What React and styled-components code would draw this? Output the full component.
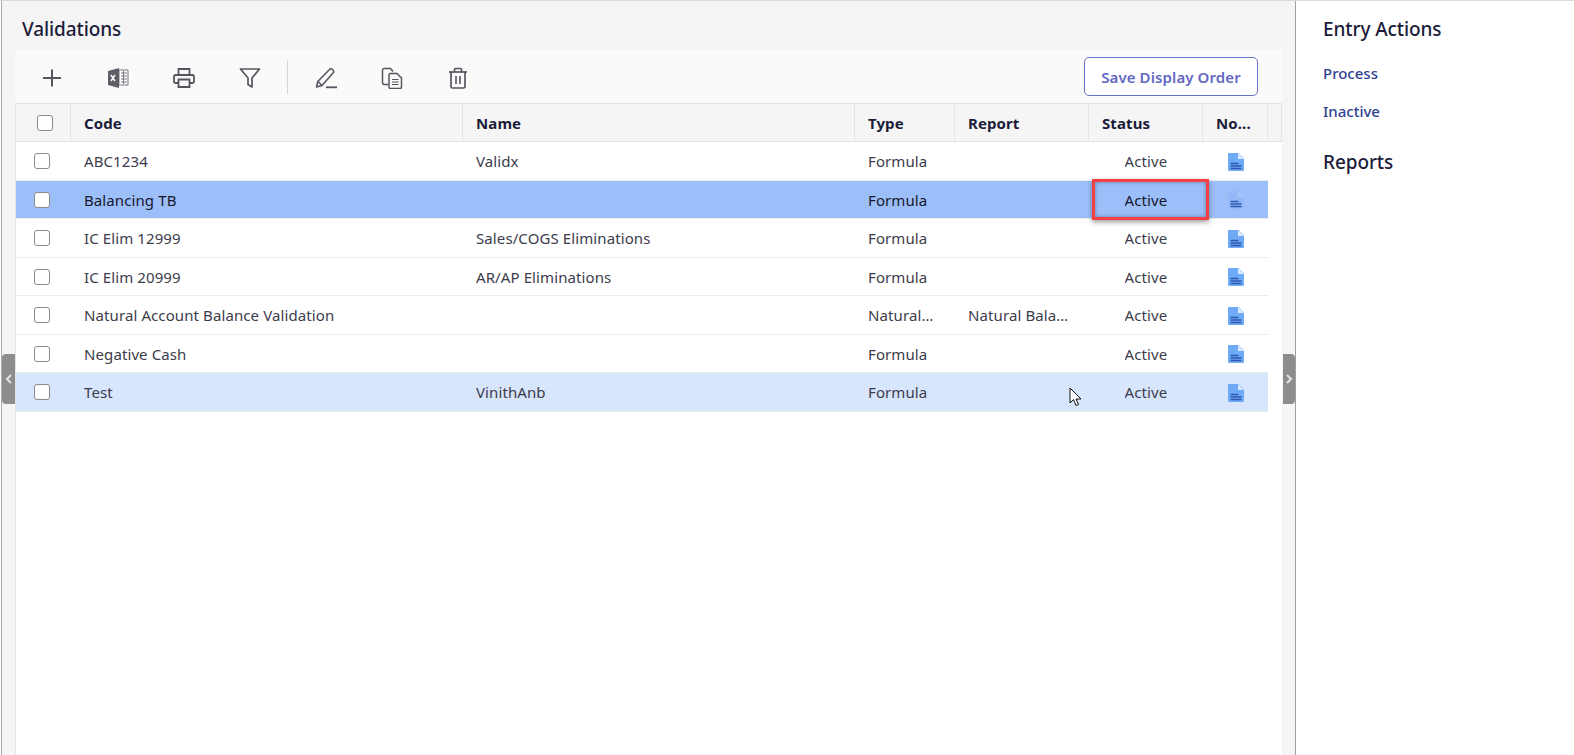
import React from "react";
import styled, { createGlobalStyle } from "styled-components";

const Global = createGlobalStyle`
  html, body { margin: 0; padding: 0; height: 100%; overflow: hidden; background: #fff; }
  body { font-family: "Noto Sans", "Open Sans", sans-serif; color: #1c1c3a; }
  #root { height: 100vh; }
`;

const Page = styled.div`
  position: relative;
  height: 755px;
  width: 1574px;
  display: flex;
  border-top: 1px solid #d9d9d9;
  box-sizing: border-box;
  overflow: hidden;
`;
const Main = styled.main`
  width: 1295px;
  margin-left: 1px;
  border-left: 1px solid #a8a8a8;
  border-right: 1px solid #a0a0a0;
  background: #f5f5f5;
  padding: 0 13px;
  display: flex;
  flex-direction: column;
  flex: none;
  box-sizing: border-box;
`;
const Title = styled.h1`
  margin: 0;
  height: 49px;
  padding-left: 7px;
  font-size: 19px;
  font-weight: 500;
  line-height: 57px;
  letter-spacing: -0.1px;
  color: #1c1c3a;
`;
const Toolbar = styled.div`
  height: 53px;
  background: #fafafa;
  display: flex;
  align-items: center;
  padding: 0 24px 0 0;
  box-sizing: border-box;
`;
const ToolIcon = styled.button`
  width: 66px;
  height: 36px;
  border: 0;
  padding: 0;
  background: none;
  display: flex;
  align-items: center;
  justify-content: center;
  flex: none;
  position: relative;
  top: 1px;
  svg { display: block; }
  &:first-child { margin-left: 4px; }
`;
const Divider = styled.div`
  width: 1px;
  height: 34px;
  background: #d6d6d6;
  margin: 0 5px 0 4px;
  flex: none;
`;
const SaveButton = styled.button`
  margin-left: auto;
  width: 174px;
  height: 39px;
  border: 1px solid #6a6fc8;
  border-radius: 5px;
  background: #fff;
  color: #6468c4;
  font: 600 15px "Noto Sans", sans-serif;
  letter-spacing: 0.1px;
  padding: 0;
`;
const GridWrap = styled.div`
  flex: 1;
  background: #fff;
  border-left: 1px solid #e4e4e4;
  border-top: 1px solid #e4e4e4;
  display: flex;
  flex-direction: column;
`;
const cols = "55px 392px 392px 100px 134px 114px 65px";
const HeaderRow = styled.div`
  display: grid;
  grid-template-columns: ${cols} 13px;
  height: 37px;
  background: #f5f5f5;
  border-bottom: 1px solid #e2e2e2;
  flex: none;
`;
const HeadCell = styled.div`
  border-right: 1px solid #e4e4e4;
  display: flex;
  align-items: center;
  justify-content: ${(p) => (p.$box ? "center" : "flex-start")};
  padding-left: ${(p) => (p.$box ? "3px" : "13px")};
  font-size: 15px;
  font-weight: 700;
  letter-spacing: 0.1px;
  color: #1c1c3a;
  white-space: nowrap;
  box-sizing: border-box;
`;
const Row = styled.div`
  display: grid;
  grid-template-columns: ${cols};
  width: 1252px;
  height: ${(p) => p.$h}px;
  background: ${(p) => p.$bg};
  border-bottom: 1px solid #ececec;
  box-sizing: border-box;
  flex: none;
`;
const Cell = styled.div`
  display: flex;
  align-items: center;
  padding: 0 13px;
  font-size: 15px;
  letter-spacing: 0.1px;
  color: ${(p) => (p.$dark ? "#17172e" : "#3c3c4c")};
  white-space: nowrap;
  overflow: hidden;
  min-width: 0;
  box-sizing: border-box;
  justify-content: ${(p) => (p.$center ? "center" : "flex-start")};
  > span { overflow: hidden; text-overflow: ellipsis; }
`;
const CheckCell = styled(Cell)`
  padding: 0 0 0 18px;
`;
const Box = styled.span`
  width: 14px;
  height: 14px;
  background: #fff;
  border: 1px solid #8a8a8a;
  border-radius: 3px;
  display: block;
  flex: none;
`;
const NoteCell = styled(Cell)`
  padding: 1px 0 0 25px;
`;
const SidePanel = styled.aside`
  flex: 1;
  padding: 0 0 0 27px;
  background: #fff;
`;
const SideHeading = styled.h2`
  margin: 0;
  font-size: 19px;
  font-weight: 500;
  letter-spacing: -0.1px;
  color: #1c1c3a;
  line-height: 24px;
  padding-top: ${(p) => p.$top}px;
`;
const ActionLink = styled.a`
  display: block;
  font-size: 15px;
  font-weight: 500;
  color: #2f4191;
  line-height: 20px;
  margin-top: ${(p) => p.$top}px;
`;
const Handle = styled.div`
  position: absolute;
  top: 353px;
  left: ${(p) => p.$left}px;
  width: ${(p) => p.$w}px;
  height: 50px;
  background: #8d8d8d;
  border-radius: ${(p) => p.$radius};
  display: flex;
  align-items: center;
  justify-content: center;
`;
const Highlight = styled.div`
  position: absolute;
  left: 1092px;
  top: 178px;
  width: 117px;
  height: 41px;
  box-sizing: border-box;
  border: 3px solid #f44044;
  box-shadow: 0 2px 5px rgba(0, 0, 0, 0.4), inset 0 0 4px rgba(0, 0, 0, 0.35);
`;
const Cursor = styled.svg`
  position: absolute;
  left: 1069px;
  top: 386px;
`;

const stroke = "#55565f";
const PlusIcon = () => (
  <svg width="20" height="20" viewBox="0 0 20 20" fill="none" stroke={stroke} strokeWidth="2">
    <path d="M10 1.5v17M1 10h18" />
  </svg>
);
const ExcelIcon = () => (
  <svg width="22" height="22" viewBox="0 0 22 22" fill="none">
    <path d="M12 3h9v15h-9z" fill="#fff" stroke="#77787f" />
    <path d="M14 6h6M14 9h6M14 12h6M14 15h6M16.5 4v13" stroke="#77787f" strokeWidth="1" />
    <path d="M1 4l11-3v20L1 18z" fill="#5d5e66" />
    <path d="M4 8l4 6M8 8l-4 6" stroke="#fff" strokeWidth="1.4" />
  </svg>
);
const PrintIcon = () => (
  <svg width="22" height="22" viewBox="0 0 22 22" fill="none" stroke={stroke} strokeWidth="1.8">
    <path d="M5.5 8V2h11v6" />
    <path d="M5 16H2.5A1.5 1.5 0 0 1 1 14.500V9.500A1.500 1.500 0 0 1 2.500 8h17A1.500 1.500 0 0 1 21 9.500v5a1.500 1.500 0 0 1-1.500 1.500H17" />
    <path d="M5.500 12.500h11V20h-11z" />
  </svg>
);
const FilterIcon = () => (
  <svg width="22" height="22" viewBox="0 0 22 22" fill="none" stroke={stroke} strokeWidth="1.7" strokeLinejoin="round">
    <path d="M1.500 2h19l-7.500 9v9l-4-2.500V11z" />
  </svg>
);
const PenIcon = () => (
  <svg width="22" height="22" viewBox="0 0 22 22" fill="none" stroke={stroke} strokeWidth="1.6" strokeLinejoin="round">
    <path d="M1.500 20l1.300-5.500L14.500 2.500a2 2 0 0 1 3 0l.5.500a2 2 0 0 1 0 3L7 18.500z" />
    <path d="M3 14.500l4 4" />
    <path d="M11 20.300h11" strokeWidth="1.800" />
  </svg>
);
const CopyIcon = () => (
  <svg width="22" height="22" viewBox="0 0 22 22" fill="none" stroke={stroke} strokeWidth="1.500" strokeLinejoin="round">
    <path d="M7 17.500H3a1.500 1.500 0 0 1-1.500-1.500V3A1.500 1.500 0 0 1 3 1.500h6.500L12 4.500" />
    <path d="M8 8a1.500 1.500 0 0 1 1.500-1.500H16l4.500 4.500v9a1.500 1.500 0 0 1-1.500 1.500H9.500A1.500 1.500 0 0 1 8 20z" />
    <path d="M11 12.500h6.500M11 15h6.500M11 17.500h6.500" strokeWidth="1.200" />
  </svg>
);
const TrashIcon = () => (
  <svg width="22" height="22" viewBox="0 0 22 22" fill="none" stroke={stroke} strokeWidth="1.700" strokeLinejoin="round">
    <path d="M2 5h18" />
    <path d="M7.500 5V2.500a1 1 0 0 1 1-1h5a1 1 0 0 1 1 1V5" />
    <path d="M4 5v14.500A1.500 1.500 0 0 0 5.500 21h11a1.500 1.500 0 0 0 1.500-1.500V5" />
    <path d="M9 9v8M13 9v8" strokeWidth="1.600" />
  </svg>
);
const NoteIcon = ({ $sel }) => (
  <svg width="16" height="18" viewBox="0 0 16 18">
    <path d="M1 0h9.500L16 5.500V17a1 1 0 0 1-1 1H1a1 1 0 0 1-1-1V1a1 1 0 0 1 1-1z" fill={$sel ? "#93b9f8" : "#6eaaf5"} />
    <path d="M10 0l6 6h-6z" fill={$sel ? "#a6c6fa" : "#dcebff"} />
    <path d="M2.500 10.500h8M2.500 13h11M2.500 15.500h11" stroke="#2f57b0" strokeWidth="1.300" />
  </svg>
);
const Chevron = ({ dir }) => (
  <svg width="8" height="10" viewBox="0 0 8 10" fill="none" stroke="#e4e4e4" strokeWidth="2">
    <path d={dir === "left" ? "M6 1L2 5l4 4" : "M2 1l4 4-4 4"} />
  </svg>
);

const rows = [
  { code: "ABC1234", name: "Validx", type: "Formula", report: "", h: 39 },
  { code: "Balancing TB", name: "", type: "Formula", report: "", h: 38, bg: "#9cbffa", dark: true },
  { code: "IC Elim 12999", name: "Sales/COGS Eliminations", type: "Formula", report: "", h: 39 },
  { code: "IC Elim 20999", name: "AR/AP Eliminations", type: "Formula", report: "", h: 38 },
  { code: "Natural Account Balance Validation", name: "", type: "NaturalBalance", report: "Natural Balance Report", h: 39 },
  { code: "Negative Cash", name: "", type: "Formula", report: "", h: 38 },
  { code: "Test", name: "VinithAnb", type: "Formula", report: "", h: 39, bg: "#d7e5fd" },
];

export default function App() {
  return (
    <Page>
      <Global />
      <Main>
        <Title>Validations</Title>
        <Toolbar>
          <ToolIcon><PlusIcon /></ToolIcon>
          <ToolIcon><ExcelIcon /></ToolIcon>
          <ToolIcon><PrintIcon /></ToolIcon>
          <ToolIcon><FilterIcon /></ToolIcon>
          <Divider />
          <ToolIcon><PenIcon /></ToolIcon>
          <ToolIcon><CopyIcon /></ToolIcon>
          <ToolIcon><TrashIcon /></ToolIcon>
          <SaveButton>Save Display Order</SaveButton>
        </Toolbar>
        <GridWrap>
          <HeaderRow>
            <HeadCell $box><Box /></HeadCell>
            <HeadCell>Code</HeadCell>
            <HeadCell>Name</HeadCell>
            <HeadCell>Type</HeadCell>
            <HeadCell>Report</HeadCell>
            <HeadCell>Status</HeadCell>
            <HeadCell>No...</HeadCell>
            <HeadCell />
          </HeaderRow>
          {rows.map((r) => (
            <Row key={r.code} $h={r.h} $bg={r.bg || "#fff"}>
              <CheckCell><Box /></CheckCell>
              <Cell $dark={r.dark}><span>{r.code}</span></Cell>
              <Cell $dark={r.dark}><span>{r.name}</span></Cell>
              <Cell $dark={r.dark}><span>{r.type}</span></Cell>
              <Cell $dark={r.dark}><span>{r.report}</span></Cell>
              <Cell $dark={r.dark} $center><span>Active</span></Cell>
              <NoteCell><NoteIcon $sel={r.dark} /></NoteCell>
            </Row>
          ))}
        </GridWrap>
      </Main>
      <SidePanel>
        <SideHeading $top={16}>Entry Actions</SideHeading>
        <ActionLink $top={22}>Process</ActionLink>
        <ActionLink $top={18}>Inactive</ActionLink>
        <SideHeading $top={29}>Reports</SideHeading>
      </SidePanel>
      <Handle $left={2} $w={13} $radius="4px 0 0 4px"><Chevron dir="left" /></Handle>
      <Handle $left={1283} $w={12} $radius="0 4px 4px 0"><Chevron dir="right" /></Handle>
      <Highlight />
      <Cursor width="14" height="20" viewBox="0 0 14 20">
        <path d="M1 1v15l3.500-3.500L7 18.500l2.500-1-2.500-5.500h5z" fill="#fff" stroke="#111" strokeWidth="1" strokeLinejoin="round" />
      </Cursor>
    </Page>
  );
}
